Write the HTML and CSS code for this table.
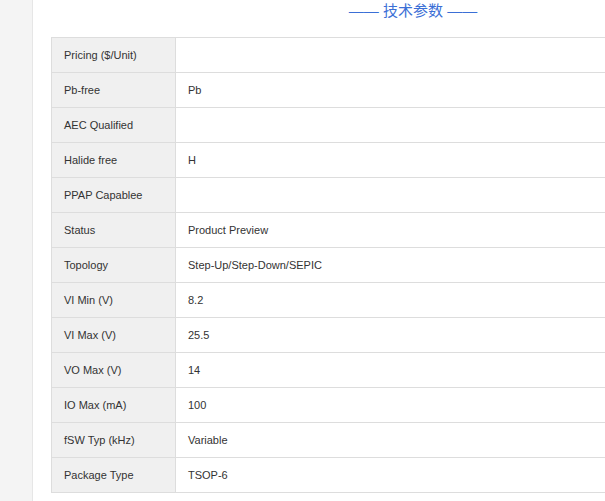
FILE: index.html
```html
<!DOCTYPE html>
<html lang="zh-CN">
<head>
    <meta charset="UTF-8">
    <title>技术参数</title>
    <link rel="stylesheet" href="styles.css">
</head>
<body>
    <div class="page">
        <div class="side"></div>
        <div class="main">
            <h2 class="section-title">—— 技术参数 ——</h2>
            <table class="spec-table">
                <tr><th>Pricing ($/Unit)</th><td></td></tr>
                <tr><th>Pb-free</th><td>Pb</td></tr>
                <tr><th>AEC Qualified</th><td></td></tr>
                <tr><th>Halide free</th><td>H</td></tr>
                <tr><th>PPAP Capablee</th><td></td></tr>
                <tr><th>Status</th><td>Product Preview</td></tr>
                <tr><th>Topology</th><td>Step-Up/Step-Down/SEPIC</td></tr>
                <tr><th>VI Min (V)</th><td>8.2</td></tr>
                <tr><th>VI Max (V)</th><td>25.5</td></tr>
                <tr><th>VO Max (V)</th><td>14</td></tr>
                <tr><th>IO Max (mA)</th><td>100</td></tr>
                <tr><th>fSW Typ (kHz)</th><td>Variable</td></tr>
                <tr><th>Package Type</th><td>TSOP-6</td></tr>
            </table>
        </div>
    </div>
</body>
</html>
```

FILE: styles.css
```css
body {
    margin: 0;
    padding: 0;
    font-family: Arial, "Liberation Sans", "Noto Sans CJK SC", sans-serif;
    background: #fff;
    overflow: hidden;
}

.page {
    display: flex;
    min-height: 501px;
}

.side {
    flex: 0 0 32px;
    background: #f4f4f4;
    border-right: 1px solid #e6e6e6;
}

.main {
    flex: 0 0 724px;
    padding: 0 0 0 18px;
}

.section-title {
    margin: 0;
    padding-top: 2px;
    height: 37px;
    box-sizing: border-box;
    text-align: center;
    font-size: 15px;
    font-weight: normal;
    line-height: 17px;
    color: #3b6fd6;
}

.spec-table {
    width: 100%;
    border-collapse: collapse;
    font-size: 11px;
    color: #333;
}

.spec-table th,
.spec-table td {
    height: 34px;
    padding: 0 12px;
    border: 1px solid #dddddd;
    text-align: left;
    font-weight: normal;
}

.spec-table th {
    width: 99px;
    background: #f0f0f0;
}
```
